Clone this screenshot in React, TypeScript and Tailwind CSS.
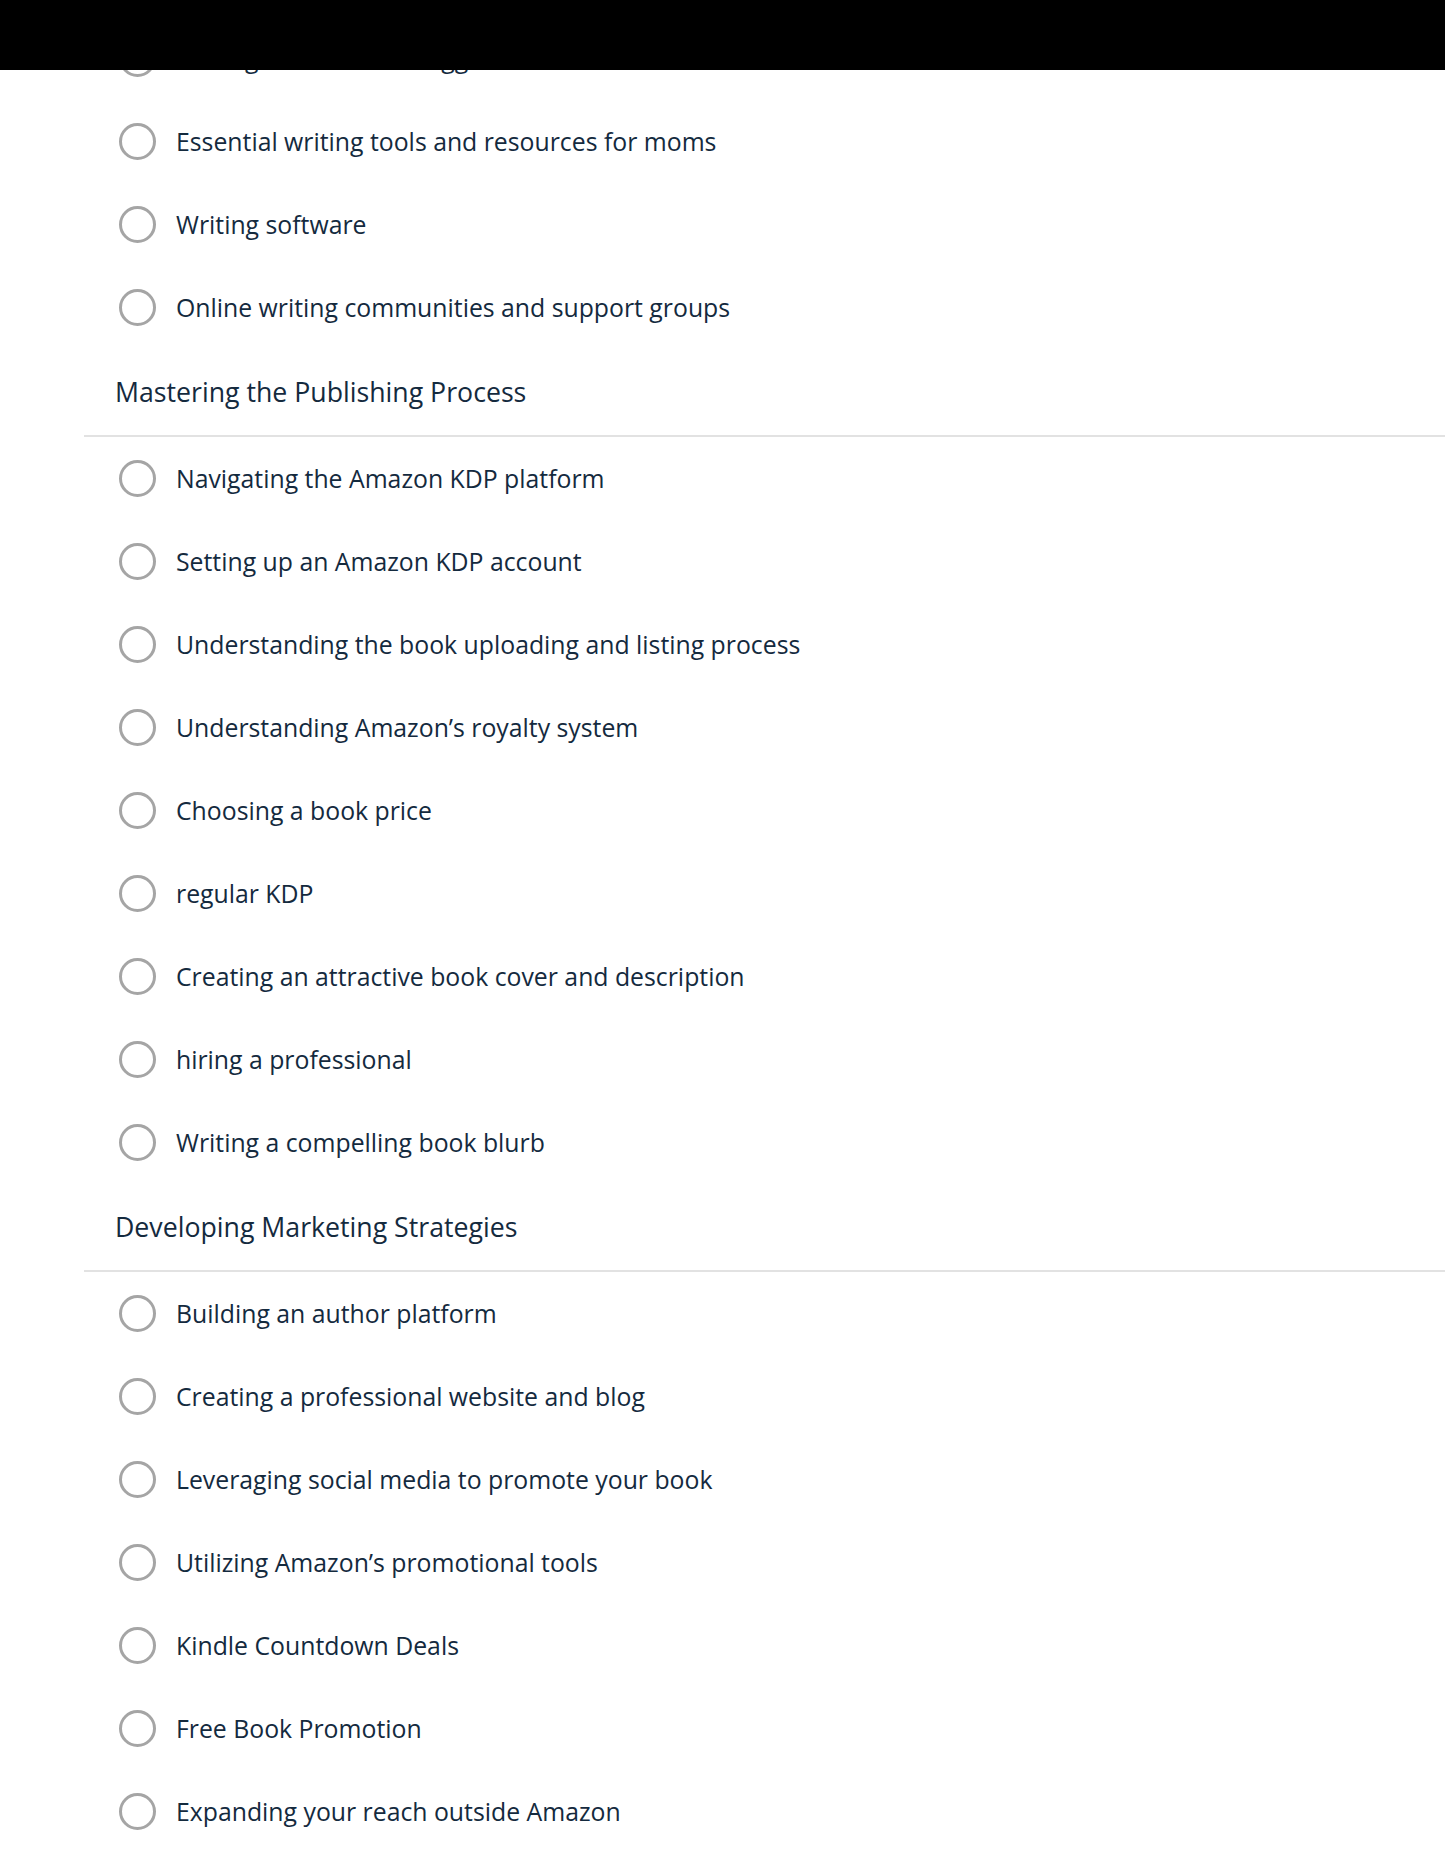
const sections: { title?: string; items: string[] }[] = [
  {
    items: [
      "Strategies for time struggles",
      "Essential writing tools and resources for moms",
      "Writing software",
      "Online writing communities and support groups",
    ],
  },
  {
    title: "Mastering the Publishing Process",
    items: [
      "Navigating the Amazon KDP platform",
      "Setting up an Amazon KDP account",
      "Understanding the book uploading and listing process",
      "Understanding Amazon’s royalty system",
      "Choosing a book price",
      "regular KDP",
      "Creating an attractive book cover and description",
      "hiring a professional",
      "Writing a compelling book blurb",
    ],
  },
  {
    title: "Developing Marketing Strategies",
    items: [
      "Building an author platform",
      "Creating a professional website and blog",
      "Leveraging social media to promote your book",
      "Utilizing Amazon’s promotional tools",
      "Kindle Countdown Deals",
      "Free Book Promotion",
      "Expanding your reach outside Amazon",
    ],
  },
];

function OptionRow({ label }: { label: string }) {
  return (
    <label className="flex h-[83px] items-center pl-[119px] cursor-pointer">
      <span className="h-[37px] w-[37px] shrink-0 rounded-full border-[3px] border-[#a5a5a5] bg-white" />
      <span className="ml-[20px] text-[24.8px] leading-none text-[#142a3e]">
        {label}
      </span>
    </label>
  );
}

export default function App() {
  return (
    <div
      className="relative min-h-[1876px] w-full bg-white pt-[17px]"
      style={{ fontFamily: '"Open Sans", "Noto Sans", sans-serif' }}
    >
      {/* redacted header */}
      <div className="absolute left-0 top-0 z-10 h-[70px] w-full bg-black" />

      {sections.map((section, i) => (
        <div key={i}>
          {section.title && (
            <>
              <div className="flex h-[86px] items-center pl-[115px]">
                <h2 className="text-[26.7px] leading-none text-[#142a3e]">
                  {section.title}
                </h2>
              </div>
              <div className="ml-[84px] h-[2px] bg-[#e2e2e2]" />
            </>
          )}
          {section.items.map((item) => (
            <OptionRow key={item} label={item} />
          ))}
        </div>
      ))}
    </div>
  );
}
